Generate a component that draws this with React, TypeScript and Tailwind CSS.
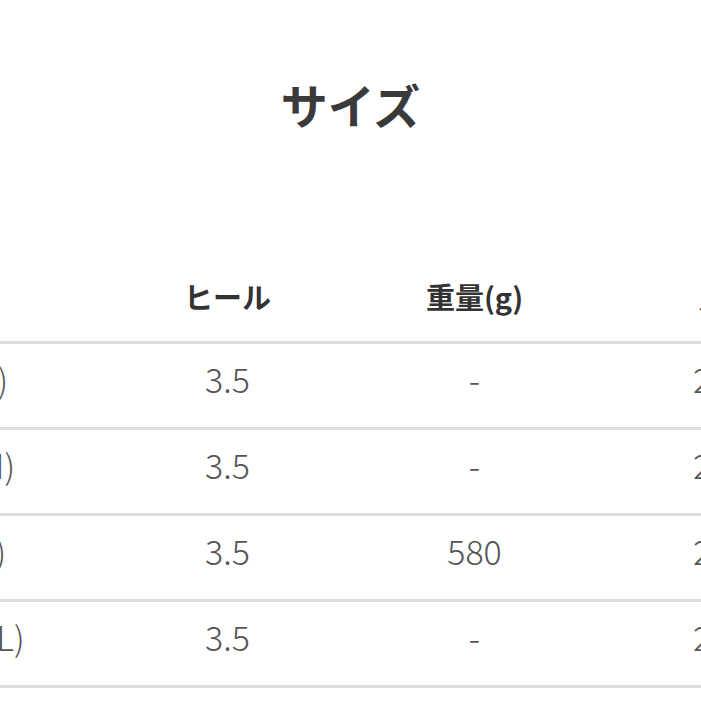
const rows = [
  { size: '23.5(S)', heel: '3.5', weight: '-', length: '23.5' },
  { size: '24.5(M)', heel: '3.5', weight: '-', length: '24.5' },
  { size: '25.5(L)', heel: '3.5', weight: '580', length: '25.5' },
  { size: '26.5(XL)', heel: '3.5', weight: '-', length: '26.5' },
]

export default function App() {
  return (
    <div
      className="w-[701px] h-[701px] overflow-hidden bg-white"
      style={{ fontFamily: '"Noto Sans CJK JP", "Noto Sans", sans-serif' }}
    >
      <h1 className="pt-[78px] text-center text-[47px] leading-[52px] font-bold text-[#3a3a3a]">
        サイズ
      </h1>

      <div className="mt-[126px] ml-[-143px] w-[988px]">
        <div className="flex h-[88px] items-center border-b-[3px] border-[#dedede] pb-[4px] text-[29px] font-bold text-[#333]">
          <div className="w-[247px] pl-[47px]">サイズ</div>
          <div className="w-[247px] text-center">ヒール</div>
          <div className="w-[247px] text-center">重量(g)</div>
          <div className="w-[247px] pl-[12px] text-center">足長</div>
        </div>

        {rows.map((row) => (
          <div
            key={row.size}
            className="flex h-[86px] items-center border-b-[3px] border-[#dedede] pb-[14px] text-[34px] font-light text-[#555]"
          >
            <div className="w-[247px] pl-[47px]">{row.size}</div>
            <div className="w-[247px] text-center">{row.heel}</div>
            <div className="w-[247px] text-center">{row.weight}</div>
            <div className="w-[247px] pl-[6px] text-center">{row.length}</div>
          </div>
        ))}
      </div>
    </div>
  )
}
